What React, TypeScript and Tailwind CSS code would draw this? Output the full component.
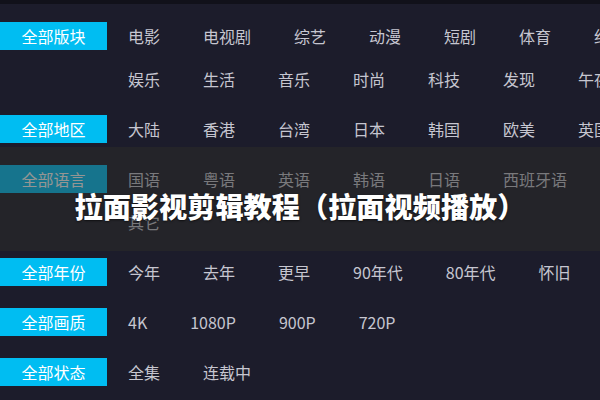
const GROUPS = [
  {
    label: "全部版块",
    items: ["电影", "电视剧", "综艺", "动漫", "短剧", "体育", "纪实", "娱乐", "生活", "音乐", "时尚", "科技", "发现", "午夜"],
  },
  { label: "全部地区", items: ["大陆", "香港", "台湾", "日本", "韩国", "欧美", "英国"] },
  { label: "全部语言", items: ["国语", "粤语", "英语", "韩语", "日语", "西班牙语", "其它"] },
  { label: "全部年份", items: ["今年", "去年", "更早", "90年代", "80年代", "怀旧"] },
  { label: "全部画质", items: ["4K", "1080P", "900P", "720P"] },
  { label: "全部状态", items: ["全集", "连载中"] },
];

export default function App() {
  return (
    <div
      className="relative w-[600px] h-[400px] overflow-hidden bg-[#1c1c2b]"
      style={{ fontFamily: '"Noto Sans CJK SC", "Noto Sans", sans-serif' }}
    >
      <div className="h-[4px] bg-[#11111a]" />

      <div className="pt-[18px]">
        {GROUPS.map((g) => (
          <div key={g.label} className="flex items-start mb-[22px]">
            <div className="w-[107px] h-[28px] shrink-0 flex items-center justify-center bg-[#00bdf2] text-white text-[16px]">
              {g.label}
            </div>
            <div className="ml-[21px] w-[507px] shrink-0 flex flex-wrap gap-x-[43px] gap-y-[15px]">
              {g.items.map((it) => (
                <span key={it} className="h-[28px] leading-[28px] text-[16px] text-[#c6c6d0] whitespace-nowrap">
                  {it}
                </span>
              ))}
            </div>
          </div>
        ))}
      </div>

      {/* title banner over the list */}
      <div className="absolute left-0 right-0 top-[147px] h-[104px] bg-[rgba(44,44,40,0.5)] flex items-center justify-center">
        <h1 className="text-white text-[28.2px] font-black leading-none mt-[14px] [text-shadow:0_1px_2px_rgba(0,0,0,0.6)]">
          拉面影视剪辑教程（拉面视频播放）
        </h1>
      </div>
    </div>
  );
}
